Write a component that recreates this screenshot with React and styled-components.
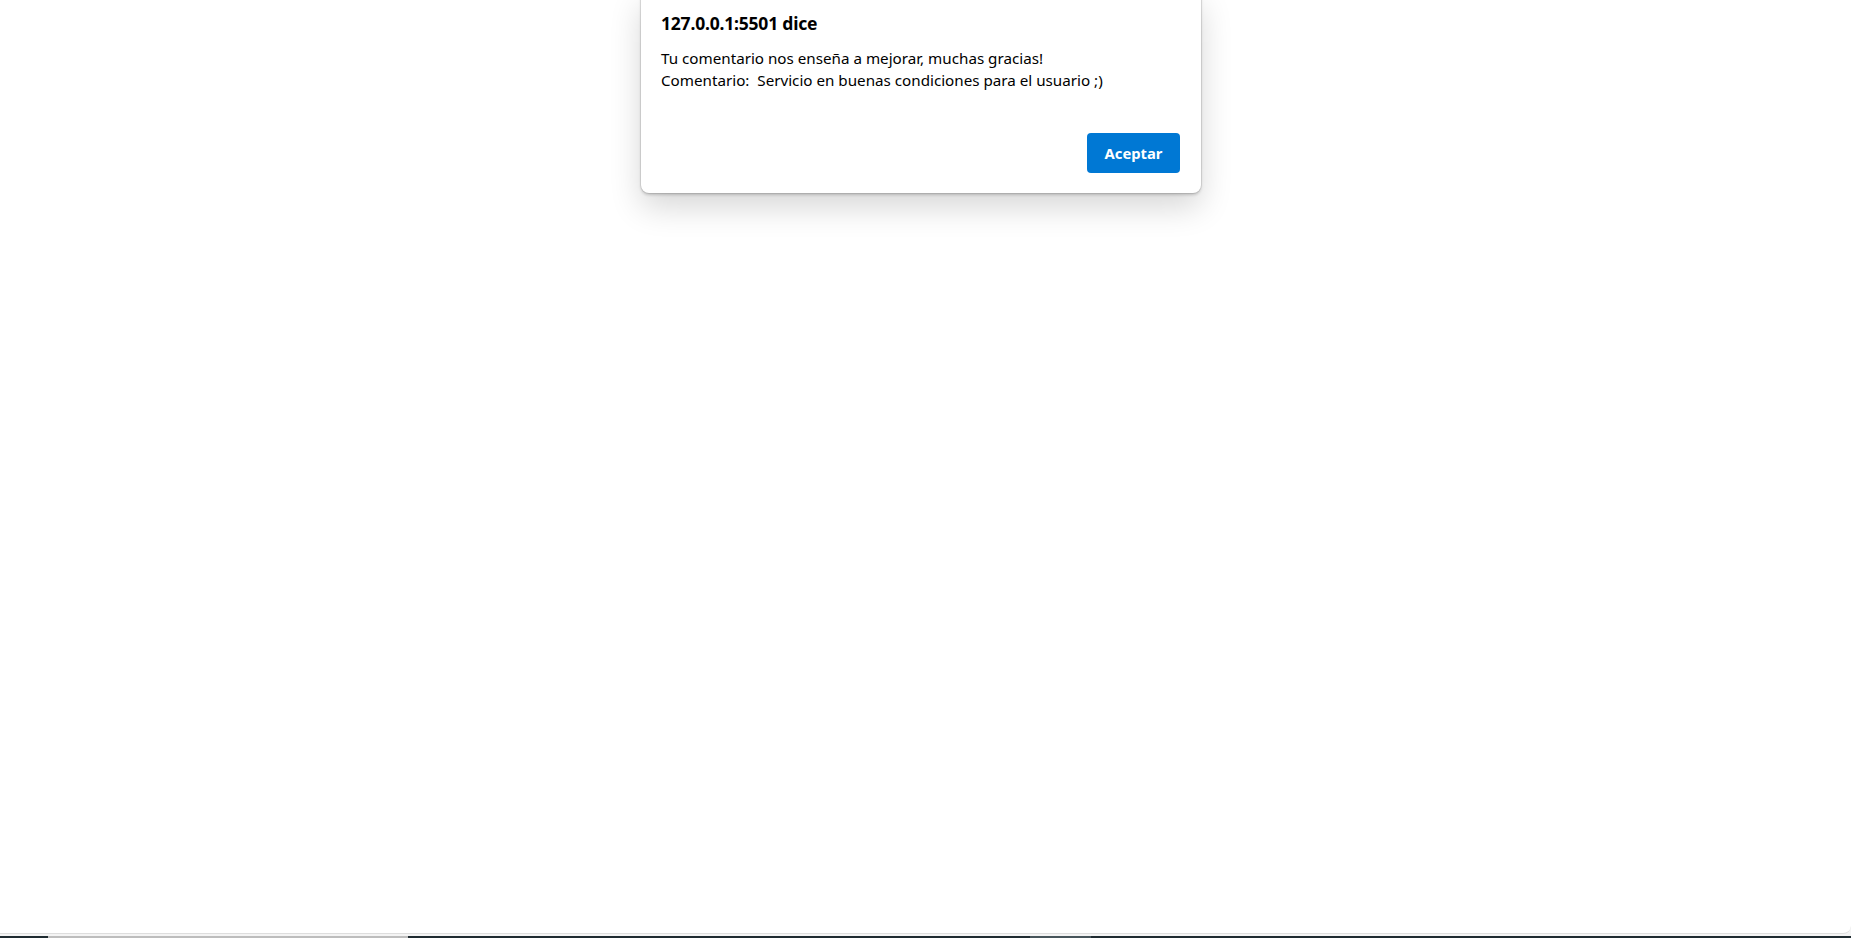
import React from "react";
import styled, { createGlobalStyle } from "styled-components";

const Global = createGlobalStyle`
  html, body { margin: 0; padding: 0; background: #ffffff; }
  body { font-family: "Noto Sans", "Open Sans", sans-serif; overflow: hidden; }
`;

const Viewport = styled.div`
  width: 1851px;
  height: 938px;
  display: flex;
  flex-direction: column;
  background: #f4f4f4;
`;

const Content = styled.main`
  flex: 1;
  background: #ffffff;
  border-bottom: 1px solid #dedede;
  border-bottom-right-radius: 8px;
  margin-bottom: 2px;
  display: flex;
  justify-content: center;
  align-items: flex-start;
  padding-right: 9px;
`;

const Dialog = styled.div`
  width: 560px;
  box-sizing: border-box;
  margin-top: -8px;
  padding: 20px 21px 20px 20px;
  background: #ffffff;
  border-radius: 0 0 8px 8px;
  box-shadow: 0 0 0 1px rgba(0, 0, 0, 0.08), 0 2px 3px rgba(0, 0, 0, 0.18),
    0 14px 32px rgba(0, 0, 0, 0.16);
  display: flex;
  flex-direction: column;
`;

const Title = styled.h1`
  margin: 0;
  font-size: 17.5px;
  font-weight: 700;
  line-height: 23px;
  color: #000000;
  letter-spacing: -0.2px;
`;

const Message = styled.p`
  margin: 12px 0 0;
  font-size: 15.2px;
  line-height: 22px;
  color: #000000;
  white-space: pre-wrap;
`;

const Actions = styled.div`
  display: flex;
  justify-content: flex-end;
  margin-top: 42px;
`;

const Button = styled.button`
  width: 93px;
  height: 40px;
  border: none;
  border-radius: 4px;
  background: #0078d4;
  color: #ffffff;
  font-family: inherit;
  font-size: 14.8px;
  font-weight: 700;
  cursor: pointer;
`;

const Taskbar = styled.div`
  height: 2px;
  display: flex;
  background: #1f2b31;
`;

const Segment = styled.div`
  width: ${(p) => p.$w}px;
  background: ${(p) => p.$c || "#1f2b31"};
`;

export default function App() {
  return (
    <>
      <Global />
      <Viewport>
        <Content>
          <Dialog role="alertdialog">
            <Title>127.0.0.1:5501 dice</Title>
            <Message>
              {"Tu comentario nos enseña a mejorar, muchas gracias!\nComentario:  Servicio en buenas condiciones para el usuario ;)"}
            </Message>
            <Actions>
              <Button>Aceptar</Button>
            </Actions>
          </Dialog>
        </Content>
        <Taskbar>
          <Segment $w={48} />
          <Segment $w={360} $c="#bdbdbd" />
          <Segment $w={622} />
          <Segment $w={61} $c="#47555b" />
        </Taskbar>
      </Viewport>
    </>
  );
}
